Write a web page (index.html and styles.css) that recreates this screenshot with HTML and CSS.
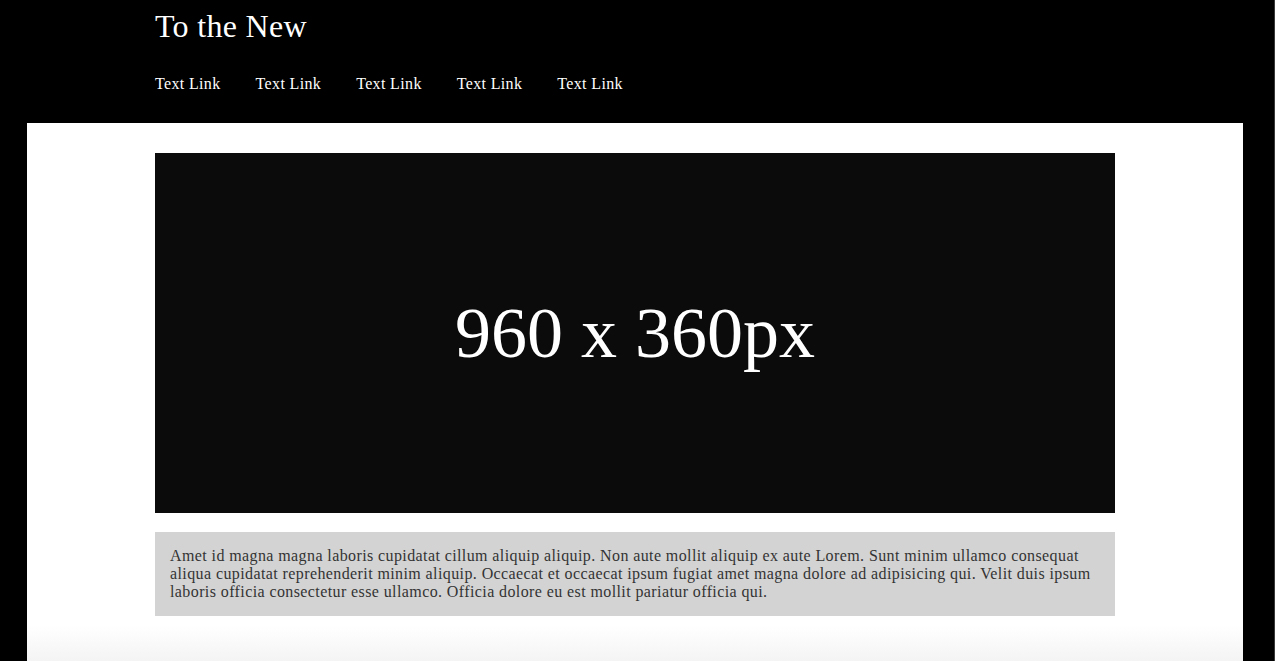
FILE: index.html
```html
<!DOCTYPE html>
<html lang="en">
<head>
<meta charset="utf-8">
<title>To the New</title>
<link rel="stylesheet" href="styles.css">
</head>
<body>
<header class="site-header">
  <div class="container">
    <h1 class="brand">To the New</h1>
    <nav class="nav">
      <a href="#" class="nav-link">Text Link</a>
      <a href="#" class="nav-link">Text Link</a>
      <a href="#" class="nav-link">Text Link</a>
      <a href="#" class="nav-link">Text Link</a>
      <a href="#" class="nav-link">Text Link</a>
    </nav>
  </div>
</header>
<main class="main">
  <div class="hero">960 x 360px</div>
  <p class="intro">Amet id magna magna laboris cupidatat cillum aliquip aliquip. Non aute mollit aliquip ex aute Lorem. Sunt minim ullamco consequat aliqua cupidatat reprehenderit minim aliquip. Occaecat et occaecat ipsum fugiat amet magna dolore ad adipisicing qui. Velit duis ipsum laboris officia consectetur esse ullamco. Officia dolore eu est mollit pariatur officia qui.</p>
</main>
</body>
</html>
```

FILE: styles.css
```css
html, body {
  margin: 0;
  padding: 0;
}

body {
  background: #000;
  font-family: "Liberation Serif", "Times New Roman", serif;
  min-height: 100vh;
  box-shadow: inset -1px 0 #3a3a3a;
  overflow: hidden;
}

.site-header {
  padding: 8px 0 30px;
}

.container {
  width: 960px;
  margin-left: 155px;
}

.brand {
  margin: 0;
  font-size: 32px;
  line-height: 37px;
  font-weight: normal;
  letter-spacing: 0.3px;
  color: #fff;
}

.nav {
  display: flex;
  gap: 35px;
  margin-top: 30px;
}

.nav-link {
  color: #fff;
  text-decoration: none;
  font-size: 16px;
  line-height: 18px;
  letter-spacing: 0.35px;
}

.main {
  margin-left: 27px;
  width: 1216px;
  box-sizing: border-box;
  padding: 30px 128px 45px;
  background: linear-gradient(to bottom, #fff calc(100% - 36px), #f4f4f4);
}

.hero {
  height: 360px;
  background: #0b0b0b;
  color: #fff;
  font-size: 72px;
  display: flex;
  align-items: center;
  justify-content: center;
}

.intro {
  margin: 19px 0 0;
  padding: 15px;
  background: #d3d3d3;
  color: #333;
  font-size: 16px;
  line-height: 18px;
  letter-spacing: 0.4px;
}
```
